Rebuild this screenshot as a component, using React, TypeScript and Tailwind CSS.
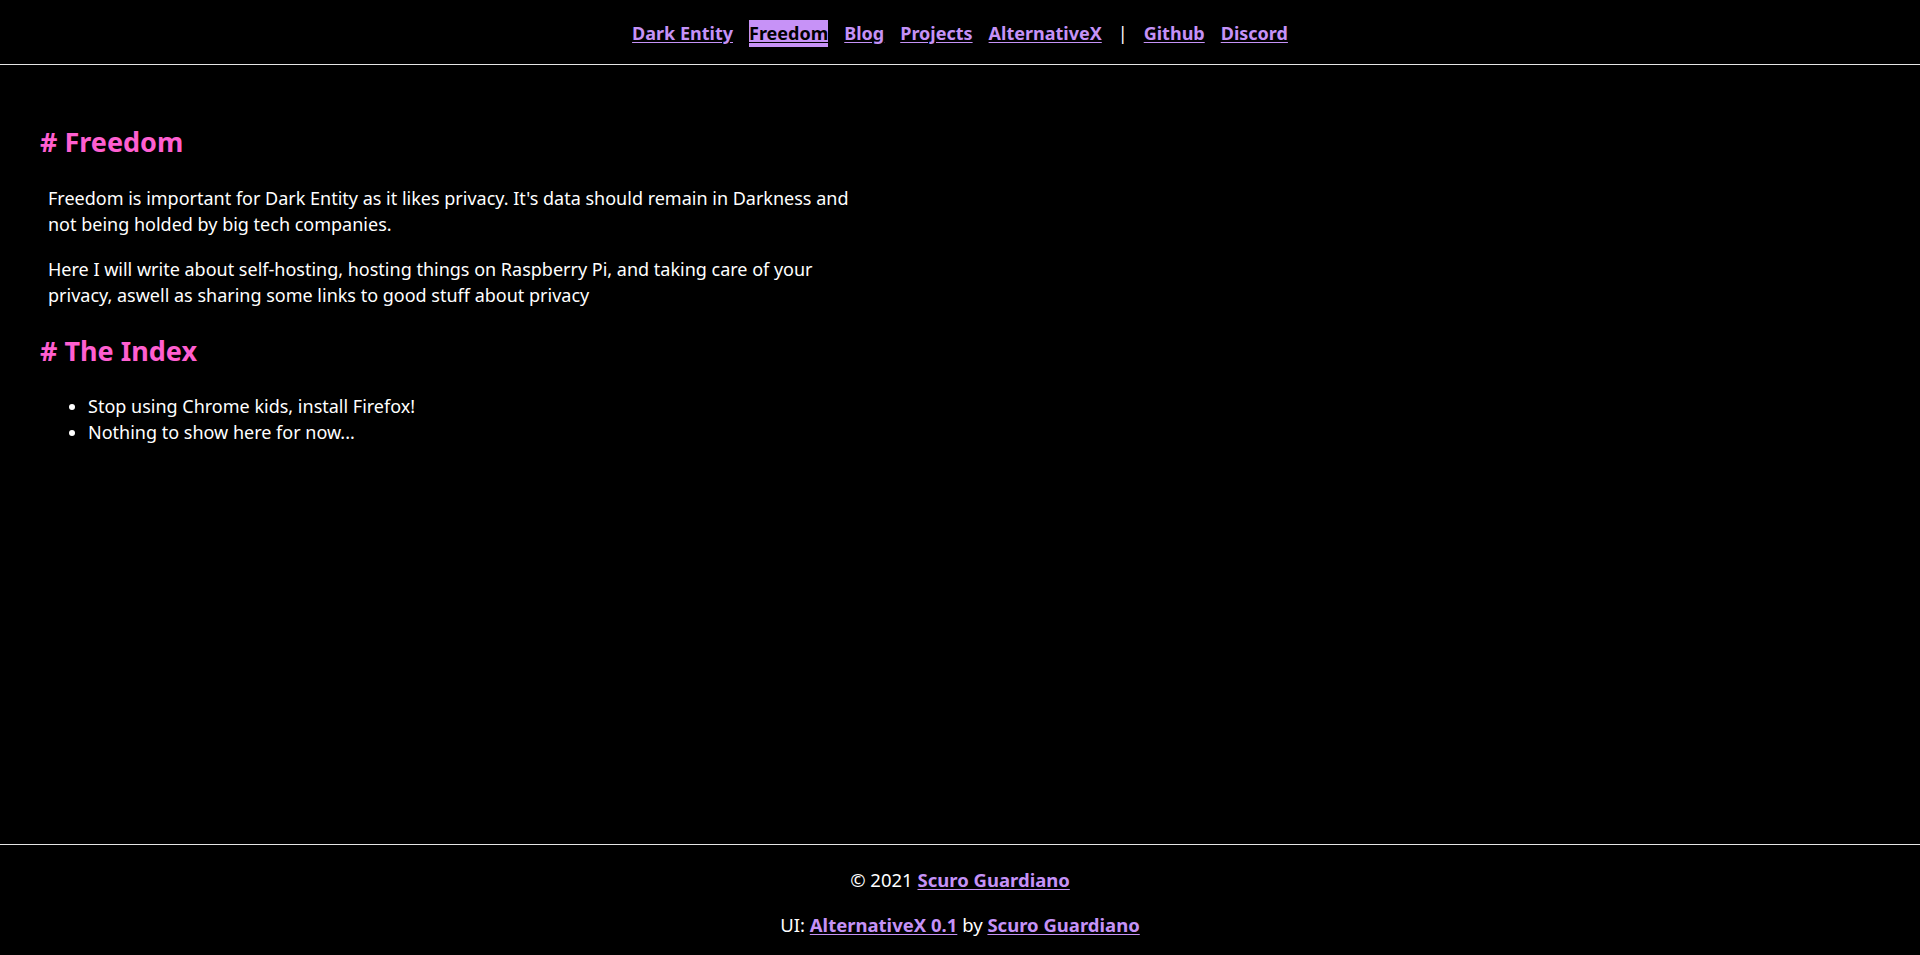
import React from 'react'

const font = { fontFamily: '"Noto Sans", "Open Sans", sans-serif' }

const links = ['Dark Entity', 'Freedom', 'Blog', 'Projects', 'AlternativeX']

function NavLink({ label, active }: { label: string; active?: boolean }) {
  return (
    <a
      href="#"
      className={
        active
          ? 'bg-[#c792f7] text-black font-bold underline underline-offset-2'
          : 'text-[#c592f7] font-bold underline underline-offset-2'
      }
    >
      {label}
    </a>
  )
}

export default function App() {
  return (
    <div className="min-h-screen bg-black text-white flex flex-col text-[18px]" style={font}>
      <header className="h-[65px] border-b border-[#e5e5e5] flex items-center justify-center gap-4 text-[18px] pt-[3px]">
        {links.map(l => (
          <NavLink key={l} label={l} active={l === 'Freedom'} />
        ))}
        <span className="text-white">|</span>
        <NavLink label="Github" />
        <NavLink label="Discord" />
      </header>

      <main className="flex-1 px-10 pt-[59px]">
        <h1 className="text-[27px] font-bold text-[#ff5fd0] leading-9"># Freedom</h1>

        <div className="pl-2 mt-[25px] w-[840px] space-y-[19px] leading-[26px]">
          <p>
            Freedom is important for Dark Entity as it likes privacy. It's data should remain in Darkness and
            not being holded by big tech companies.
          </p>
          <p>
            Here I will write about self-hosting, hosting things on Raspberry Pi, and taking care of your
            privacy, aswell as sharing some links to good stuff about privacy
          </p>
        </div>

        <h2 className="text-[27px] font-bold text-[#ff5fd0] leading-9 mt-[25px]"># The Index</h2>

        <ul className="list-disc pl-12 mt-[24px] leading-[26px]">
          <li>Stop using Chrome kids, install Firefox!</li>
          <li>Nothing to show here for now...</li>
        </ul>
      </main>

      <footer className="border-t border-[#e5e5e5] h-[111px] flex flex-col items-center pt-[22px] gap-[19px] leading-[26px] text-[18.5px]">
        <p>
          © 2021{' '}
          <a href="#" className="text-[#c592f7] font-bold underline underline-offset-2">Scuro Guardiano</a>
        </p>
        <p>
          UI:{' '}
          <a href="#" className="text-[#c592f7] font-bold underline underline-offset-2">AlternativeX 0.1</a>{' '}
          by{' '}
          <a href="#" className="text-[#c592f7] font-bold underline underline-offset-2">Scuro Guardiano</a>
        </p>
      </footer>
    </div>
  )
}
